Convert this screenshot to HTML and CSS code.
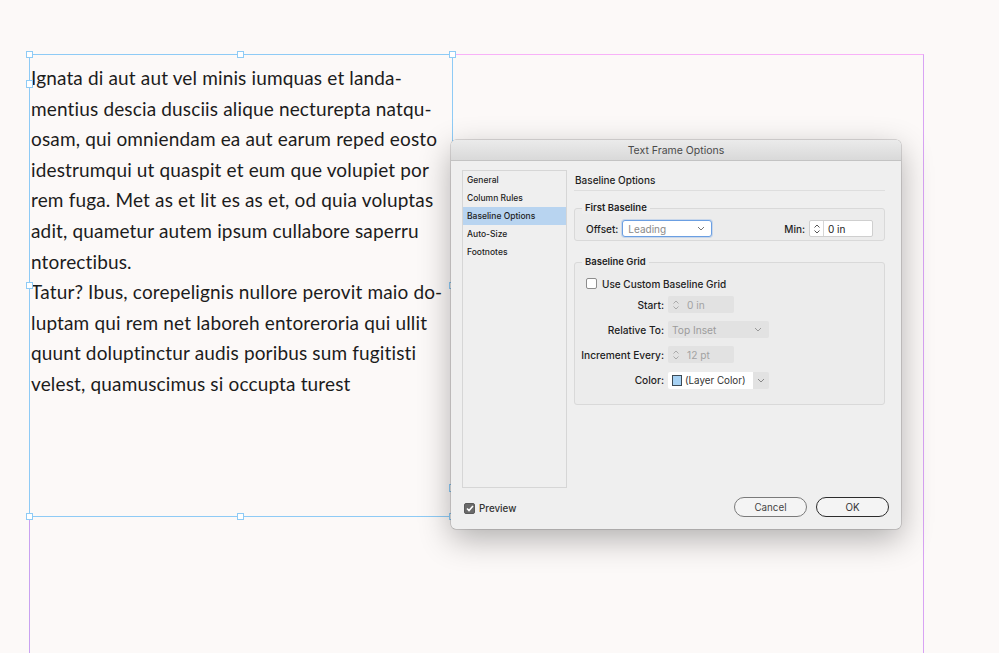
FILE: index.html
```html
<!DOCTYPE html>
<html>
<head>
<meta charset="utf-8">
<link rel="stylesheet" href="styles.css">
</head>
<body>
<div class="canvas">
  <div class="margin-guide"></div>
  <div class="text-frame">
    <div class="story">
      <div class="line">Ignata di aut aut vel minis iumquas et landa-</div>
      <div class="line">mentius descia dusciis alique necturepta natqu-</div>
      <div class="line">osam, qui omniendam ea aut earum reped eosto</div>
      <div class="line">idestrumqui ut quaspit et eum que volupiet por</div>
      <div class="line">rem fuga. Met as et lit es as et, od quia voluptas</div>
      <div class="line">adit, quametur autem ipsum cullabore saperru</div>
      <div class="line">ntorectibus.</div>
      <div class="line">Tatur? Ibus, corepelignis nullore perovit maio do-</div>
      <div class="line">luptam qui rem net laboreh entoreroria qui ullit</div>
      <div class="line">quunt doluptinctur audis poribus sum fugitisti</div>
      <div class="line">velest, quamuscimus si occupta turest</div>
    </div>
    <span class="handle h-tl"></span>
    <span class="handle h-tm"></span>
    <span class="handle h-tr"></span>
    <span class="handle h-ml"></span>
    <span class="handle h-mr"></span>
    <span class="handle h-bl"></span>
    <span class="handle h-bm"></span>
    <span class="handle h-br"></span>
    <span class="port p-in"></span>
    <span class="port p-out"></span>
  </div>

  <div class="dialog">
    <div class="titlebar">Text Frame Options</div>
    <div class="dlg-body">
      <div class="dlg-main">
        <ul class="sidebar">
          <li>General</li>
          <li>Column Rules</li>
          <li class="selected">Baseline Options</li>
          <li>Auto-Size</li>
          <li>Footnotes</li>
        </ul>
        <div class="panel">
          <div class="panel-title">Baseline Options</div>
          <div class="group group-first">
            <span class="legend">First Baseline</span>
            <div class="offset-row">
              <span class="lbl">Offset:</span>
              <div class="select focus"><span class="val muted">Leading</span><svg class="chev" width="8" height="5" viewBox="0 0 8 5"><path d="M1 1 L4 4 L7 1" fill="none" stroke="#777" stroke-width="1"/></svg></div>
              <span class="spacer"></span>
              <span class="lbl">Min:</span>
              <div class="stepper"><span class="arrows"><svg width="8" height="12" viewBox="0 0 8 12"><path d="M1.5 4.5 L4 2 L6.5 4.5 M1.5 7.5 L4 10 L6.5 7.5" fill="none" stroke="#555" stroke-width="1"/></svg></span><span class="val">0 in</span></div>
            </div>
          </div>
          <div class="group group-grid">
            <span class="legend">Baseline Grid</span>
            <div class="check-row"><span class="checkbox"></span>Use Custom Baseline Grid</div>
            <div class="form-grid">
              <span class="rlbl">Start:</span>
              <div class="stepper disabled"><span class="arrows"><svg width="8" height="12" viewBox="0 0 8 12"><path d="M1.5 4.5 L4 2 L6.5 4.5 M1.5 7.5 L4 10 L6.5 7.5" fill="none" stroke="#aaa" stroke-width="1"/></svg></span><span class="val">0 in</span></div>
              <span class="rlbl">Relative To:</span>
              <div class="select disabled"><span class="val">Top Inset</span><svg class="chev" width="8" height="5" viewBox="0 0 8 5"><path d="M1 1 L4 4 L7 1" fill="none" stroke="#999" stroke-width="1"/></svg></div>
              <span class="rlbl">Increment Every:</span>
              <div class="stepper disabled"><span class="arrows"><svg width="8" height="12" viewBox="0 0 8 12"><path d="M1.5 4.5 L4 2 L6.5 4.5 M1.5 7.5 L4 10 L6.5 7.5" fill="none" stroke="#aaa" stroke-width="1"/></svg></span><span class="val">12 pt</span></div>
              <span class="rlbl">Color:</span>
              <div class="color-select"><span class="color-val"><span class="swatch"></span>(Layer Color)</span><span class="color-btn"><svg width="8" height="5" viewBox="0 0 8 5"><path d="M1 1 L4 4 L7 1" fill="none" stroke="#888" stroke-width="1"/></svg></span></div>
            </div>
          </div>
        </div>
      </div>
      <div class="dlg-footer">
        <div class="preview"><span class="checkbox checked"><svg width="8" height="7" viewBox="0 0 8 7"><path d="M1 3.5 L3 5.5 L7 1" fill="none" stroke="#fff" stroke-width="1.6"/></svg></span>Preview</div>
        <div class="buttons">
          <button class="btn">Cancel</button>
          <button class="btn primary">OK</button>
        </div>
      </div>
    </div>
  </div>
</div>
</body>
</html>
```

FILE: styles.css
```css
html, body {
  margin: 0;
  padding: 0;
}
body {
  width: 999px;
  height: 653px;
  overflow: hidden;
  background: #fcf9f8;
}
.canvas {
  position: relative;
  width: 999px;
  height: 653px;
  overflow: hidden;
}
.margin-guide {
  position: absolute;
  left: 29px;
  top: 54px;
  width: 893px;
  height: 620px;
  border-top: 1px solid #f8b2f8;
  border-right: 1px solid #d8a3f4;
  border-left: 1px solid #c9a2f1;
}
.text-frame {
  position: absolute;
  left: 29px;
  top: 54px;
  width: 422px;
  height: 461px;
  border: 1px solid #8ecbf6;
}
.story {
  padding: 8px 0 0 1px;
  font-family: Lato, "Open Sans", sans-serif;
  font-size: 19px;
  line-height: 30.6px;
  letter-spacing: 0.15px;
  color: #1c1c1c;
}
.line {
  white-space: nowrap;
}
.handle, .port {
  position: absolute;
  border: 1px solid #8ecbf6;
  background: #fff;
  box-sizing: border-box;
}
.handle { width: 7px; height: 7px; }
.h-tl { left: -4px; top: -4px; }
.h-tm { left: 207px; top: -4px; }
.h-tr { right: -4px; top: -4px; }
.h-ml { left: -4px; top: 227px; }
.h-mr { right: -4px; top: 227px; }
.h-bl { left: -4px; bottom: -4px; }
.h-bm { left: 207px; bottom: -4px; }
.h-br { right: -4px; bottom: -4px; }
.port { width: 7px; height: 8px; }
.p-in { left: -4px; top: 25px; }
.p-out { right: -4px; top: 429px; }

/* Dialog */
.dialog {
  position: absolute;
  left: 451px;
  top: 140px;
  width: 450px;
  height: 389px;
  border-radius: 5px;
  background: #efefef;
  box-shadow: 0 10px 32px rgba(0,0,0,0.30), 0 0 0 0.5px rgba(0,0,0,0.25);
  font-family: Inter, "Noto Sans", sans-serif;
  color: #1e1e1e;
  overflow: hidden;
}
.titlebar {
  height: 20px;
  line-height: 21px;
  text-align: center;
  font-size: 10.5px;
  color: #4a4a4a;
  background: linear-gradient(#ebebeb, #d9d9d9);
  border-bottom: 1px solid #c3c3c3;
}
.dlg-body {
  padding: 9px 12px 0 11px;
}
.dlg-main {
  display: flex;
  gap: 7px;
  height: 318px;
}
.sidebar {
  list-style: none;
  margin: 0;
  padding: 0;
  width: 103px;
  border: 1px solid #d6d6d6;
  font-size: 8.5px;
  font-weight: 500;
}
.sidebar li {
  height: 18px;
  line-height: 18px;
  padding-left: 4px;
}
.sidebar li.selected {
  background: #b8d4f0;
}
.panel {
  width: 311px;
  display: flex;
  flex-direction: column;
}
.panel-title {
  font-size: 10px;
  font-weight: 500;
  height: 20px;
  line-height: 20px;
  padding-left: 1px;
  border-bottom: 1px solid #dedede;
}
.group {
  position: relative;
  box-sizing: border-box;
  border: 1px solid #d9d9d9;
  border-radius: 3px;
  background: #ececec;
  padding: 0 11px 0 11px;
}
.legend {
  position: absolute;
  left: 7px;
  top: -7px;
  padding: 0 3px;
  line-height: 12px;
  font-size: 9.5px;
  font-weight: 600;
  background: #eeeeee;
}
.group-first {
  margin-top: 17px;
  height: 33px;
  padding-top: 11px;
}
.offset-row {
  display: flex;
  align-items: center;
  font-size: 10px;
  font-weight: 500;
}
.lbl { margin-right: 4px; }
.spacer { flex: 1; }
.select {
  display: flex;
  align-items: center;
  justify-content: space-between;
  box-sizing: border-box;
  height: 17px;
  width: 90px;
  padding: 0 6px 0 5px;
  border-radius: 3px;
  background: #fff;
  font-size: 10px;
  font-weight: 400;
}
.select.focus {
  border: 1px solid #6b9fe2;
  box-shadow: 0 0 0 1px rgba(120,165,230,0.3);
}
.val.muted { color: #8a8a8a; }
.stepper {
  display: flex;
  align-items: center;
  box-sizing: border-box;
  height: 17px;
  width: 64px;
  background: #fff;
  border: 1px solid #cfcfcf;
  border-radius: 2px;
  font-size: 10px;
  font-weight: 400;
}
.stepper .arrows {
  width: 13px;
  height: 100%;
  display: flex;
  align-items: center;
  justify-content: center;
  border-right: 1px solid #d6d6d6;
}
.stepper .val { padding-left: 4px; }
.group-grid {
  margin-top: 21px;
  height: 143px;
  padding-top: 15px;
}
.check-row {
  display: flex;
  align-items: center;
  gap: 5px;
  height: 11px;
  font-size: 10px;
  font-weight: 500;
  color: #222;
}
.checkbox {
  display: inline-flex;
  align-items: center;
  justify-content: center;
  box-sizing: border-box;
  width: 11px;
  height: 11px;
  border: 1px solid #8d8d8d;
  border-radius: 2px;
  background: #fff;
}
.checkbox.checked {
  background: #6a6a6a;
  border-color: #5a5a5a;
}
.form-grid {
  display: grid;
  grid-template-columns: 89px auto;
  column-gap: 4px;
  row-gap: 8px;
  align-items: center;
  justify-items: start;
  margin-top: 7px;
  margin-left: -11px;
  font-size: 10.2px;
}
.rlbl {
  justify-self: end;
  white-space: nowrap;
  font-weight: 500;
}
.stepper.disabled {
  border: none;
  background: #e2e2e2;
  color: #a3a3a3;
  width: 66px;
  font-size: 10.2px;
}
.stepper.disabled .arrows {
  border-right: none;
  width: 15px;
}
.select.disabled {
  background: #e2e2e2;
  color: #9c9c9c;
  border-radius: 2px;
  width: 101px;
  font-size: 10.2px;
  padding: 0 7px 0 4px;
}
.color-select {
  display: flex;
  width: 101px;
  height: 17px;
  border-radius: 2px;
  overflow: hidden;
  margin-top: 1px;
}
.color-val {
  flex: 1;
  display: flex;
  align-items: center;
  gap: 3px;
  padding-left: 4px;
  background: #fff;
  color: #333;
  font-size: 9.8px;
}
.swatch {
  box-sizing: border-box;
  width: 10px;
  height: 11px;
  border: 1px solid #3c4a55;
  background: #a6d1f3;
}
.color-btn {
  width: 16px;
  display: flex;
  align-items: center;
  justify-content: center;
  background: #e2e2e2;
}
.dlg-footer {
  display: flex;
  align-items: center;
  justify-content: space-between;
  margin-top: 9px;
  height: 20px;
}
.preview {
  display: flex;
  align-items: center;
  gap: 4px;
  padding-left: 2px;
  margin-top: 2px;
  font-size: 9.8px;
  font-weight: 500;
  color: #333;
}
.buttons {
  display: flex;
  gap: 9px;
}
.btn {
  box-sizing: border-box;
  width: 73px;
  height: 20px;
  border-radius: 10px;
  border: 1px solid #7a7a7a;
  background: #f4f4f4;
  font-family: Inter, "Noto Sans", sans-serif;
  font-size: 9.8px;
  color: #444;
  padding: 0;
}
.btn.primary {
  border: 1.5px solid #2c2c2c;
  color: #333;
}
```
